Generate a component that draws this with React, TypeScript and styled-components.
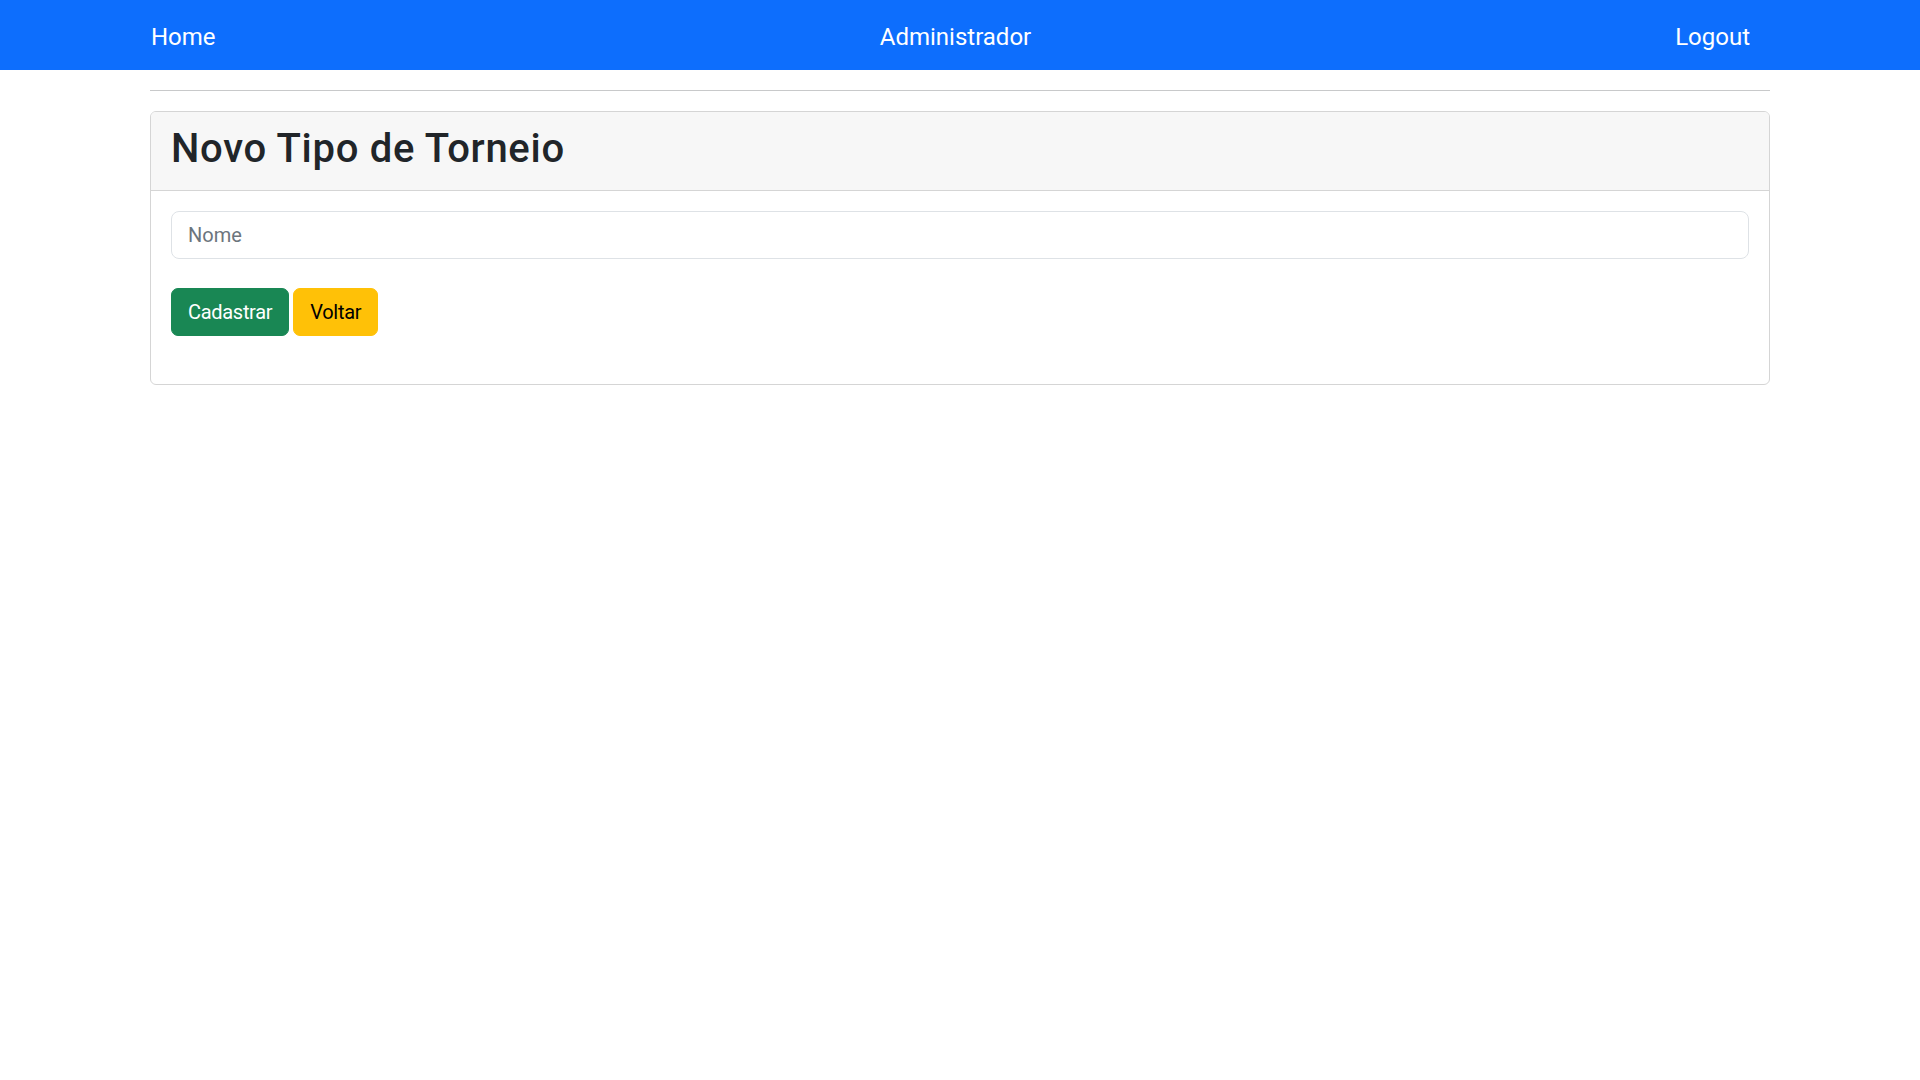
import React from "react";
import styled, { createGlobalStyle } from "styled-components";

const GlobalStyle = createGlobalStyle`
  html, body {
    margin: 0;
    padding: 0;
    background: #ffffff;
  }
  body {
    font-family: Roboto, "Segoe UI", "Liberation Sans", Arial, sans-serif;
    color: #212529;
    -webkit-font-smoothing: antialiased;
  }
  *, *::before, *::after {
    box-sizing: border-box;
  }
`;

const Navbar = styled.nav`
  background: #0d6efd;
  height: 70px;
  padding: 19px 0 15px;
`;

const NavInner = styled.div`
  max-width: 1620px;
  margin: 0 auto;
  display: grid;
  grid-template-columns: 1fr 1fr 1fr;
  align-items: center;
`;

const NavLink = styled.a<{ $align: "start" | "center" | "end" }>`
  font-size: 24px;
  line-height: 36px;
  font-weight: 400;
  color: #ffffff;
  text-decoration: none;
  cursor: pointer;
  justify-self: ${(p) => p.$align};
  padding-right: ${(p) => (p.$align === "end" ? "20px" : p.$align === "center" ? "9px" : "0")};
  padding-left: ${(p) => (p.$align === "start" ? "1px" : "0")};
`;

const Main = styled.main`
  max-width: 1620px;
  margin: 0 auto;
`;

const Divider = styled.hr`
  margin: 20px 0;
  border: 0;
  border-top: 1px solid #c8c9ca;
`;

const Card = styled.section`
  border: 1px solid #d5d5d5;
  border-radius: 6px;
  overflow: hidden;
  background: #ffffff;
`;

const CardHeader = styled.header`
  background: #f7f7f7;
  padding: 13px 20px 17px;
  border-bottom: 1px solid #d5d5d5;
`;

const Title = styled.h1`
  margin: 0;
  font-size: 40px;
  line-height: 48px;
  font-weight: 500;
  letter-spacing: 0.7px;
  color: #212529;
`;

const CardBody = styled.form`
  padding: 20px 20px 48px;
  display: flex;
  flex-direction: column;
  gap: 29px;
`;

const TextInput = styled.input`
  display: block;
  width: 100%;
  height: 48px;
  padding: 8px 16px;
  font-family: inherit;
  font-size: 20px;
  line-height: 30px;
  color: #212529;
  background: #ffffff;
  border: 1px solid #dee2e6;
  border-radius: 8px;
  outline: none;

  &::placeholder {
    color: #6c757d;
    opacity: 1;
  }
`;

const ButtonRow = styled.div`
  display: flex;
  gap: 4px;
`;

const Button = styled.button<{ $variant: "success" | "warning" }>`
  height: 48px;
  padding: 8px 16px;
  font-family: inherit;
  font-size: 20px;
  line-height: 30px;
  font-weight: 400;
  letter-spacing: -0.3px;
  border-radius: 7px;
  cursor: pointer;
  border: 1px solid ${(p) => (p.$variant === "success" ? "#198754" : "#ffc107")};
  background: ${(p) => (p.$variant === "success" ? "#198754" : "#ffc107")};
  color: ${(p) => (p.$variant === "success" ? "#ffffff" : "#000000")};
`;

export default function App() {
  return (
    <>
      <GlobalStyle />
      <Navbar>
        <NavInner>
          <NavLink $align="start">Home</NavLink>
          <NavLink $align="center">Administrador</NavLink>
          <NavLink $align="end">Logout</NavLink>
        </NavInner>
      </Navbar>
      <Main>
        <Divider />
        <Card>
          <CardHeader>
            <Title>Novo Tipo de Torneio</Title>
          </CardHeader>
          <CardBody onSubmit={(e) => e.preventDefault()}>
            <TextInput type="text" placeholder="Nome" />
            <ButtonRow>
              <Button type="submit" $variant="success">
                Cadastrar
              </Button>
              <Button type="button" $variant="warning">
                Voltar
              </Button>
            </ButtonRow>
          </CardBody>
        </Card>
      </Main>
    </>
  );
}
